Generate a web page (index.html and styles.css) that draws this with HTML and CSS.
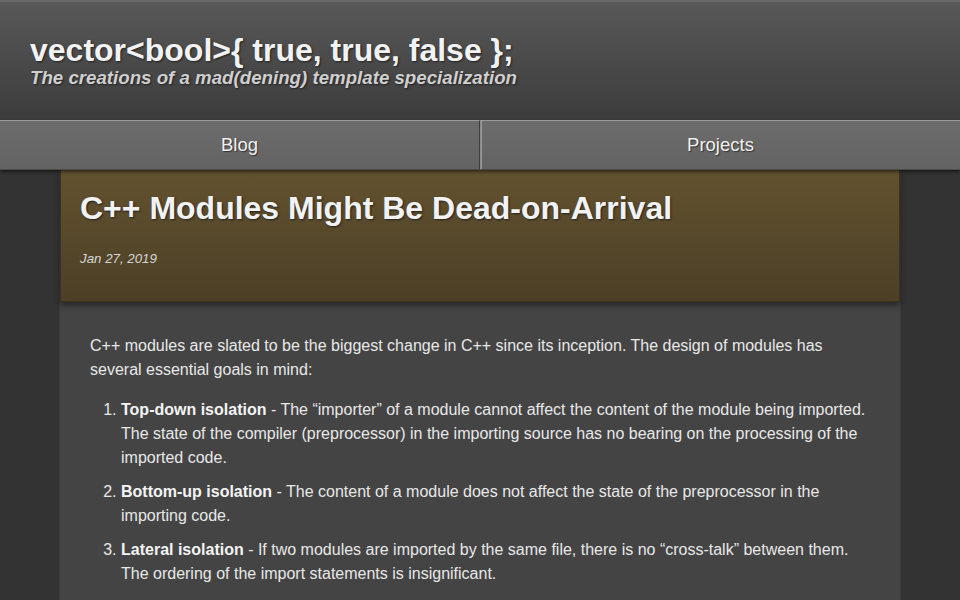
FILE: index.html
```html
<!DOCTYPE html>
<html lang="en">
<head>
<meta charset="utf-8">
<title>C++ Modules Might Be Dead-on-Arrival</title>
<link rel="stylesheet" href="styles.css">
</head>
<body>
<header class="site-header">
  <div class="site-title">vector&lt;bool&gt;{ true, true, false };</div>
  <div class="site-tagline">The creations of a mad(dening) template specialization</div>
</header>
<nav class="site-nav">
  <a class="nav-item" href="#">Blog</a>
  <a class="nav-item" href="#">Projects</a>
</nav>
<main class="page">
  <article class="post">
    <header class="post-header">
      <h1 class="post-title">C++ Modules Might Be Dead-on-Arrival</h1>
      <div class="post-date">Jan 27, 2019</div>
    </header>
    <div class="post-body">
      <p>C++ modules are slated to be the biggest change in C++ since its inception. The design of modules has several essential goals in mind:</p>
      <ol>
        <li><strong>Top-down isolation</strong><span> - The “importer” of a module cannot affect the content of the module being imported. The state of the compiler (preprocessor) in the importing source has no bearing on the processing of the imported code.</span></li>
        <li><strong>Bottom-up isolation</strong><span> - The content of a module does not affect the state of the preprocessor in the importing code.</span></li>
        <li><strong>Lateral isolation</strong><span> - If two modules are imported by the same file, there is no “cross-talk” between them. The ordering of the import statements is insignificant.</span></li>
      </ol>
    </div>
  </article>
</main>
</body>
</html>
```

FILE: styles.css
```css
html, body {
  margin: 0;
  padding: 0;
}

body {
  background: #333333;
  color: #e6e6e6;
  font-family: "Liberation Sans", Arial, sans-serif;
}

/* Site banner */
.site-header {
  height: 120px;
  box-sizing: border-box;
  padding: 31px 30px 0;
  background: linear-gradient(#585858, #3c3c3c);
  border-top: 2px solid #6a6a6a;
}

.site-title {
  font-size: 32px;
  font-weight: bold;
  line-height: 34px;
  color: #f2f2f2;
  text-shadow: 1px 1px 2px #222;
}

.site-tagline {
  font-size: 18.7px;
  font-weight: bold;
  font-style: italic;
  line-height: 22px;
  color: #cfcfcf;
  text-shadow: 1px 1px 2px #222;
}

/* Navigation bar */
.site-nav {
  display: flex;
  height: 50px;
  position: relative;
  z-index: 2;
  box-shadow: 0 2px 3px rgba(0, 0, 0, 0.5);
}

.nav-item {
  flex: 1;
  display: flex;
  align-items: center;
  justify-content: center;
  box-sizing: border-box;
  background: linear-gradient(#6c6c6c, #636363);
  border-top: 1px solid #9a9a9a;
  border-bottom: 1px solid #4a4a4a;
  color: #f0f0f0;
  font-size: 18.5px;
  text-decoration: none;
  text-shadow: 1px 1px 1px #333;
}

.nav-item + .nav-item {
  border-left: 1px solid #8a8a8a;
  box-shadow: inset 1px 0 0 #9a9a9a;
}

.nav-item:first-child {
  border-right: 1px solid #3e3e3e;
}

/* Page column */
.page {
  width: 840px;
  margin: 0 auto;
  min-height: 430px;
  background: #444444;
  box-shadow: -1px 0 0 #3a3a3a, 1px 0 0 #3a3a3a;
}

.post-header {
  box-sizing: border-box;
  height: 132px;
  padding: 19px 19px 0;
  background: linear-gradient(#62522f, #4c3f26);
  border: 1px solid #3b3220;
  border-top: none;
  box-shadow: 0 3px 6px rgba(0, 0, 0, 0.45);
  position: relative;
}

.post-title {
  margin: 0;
  font-size: 32px;
  line-height: 38px;
  font-weight: bold;
  color: #f2f2f2;
  text-shadow: 1px 1px 2px #222;
}

.post-date {
  margin-top: 23px;
  font-size: 13.3px;
  line-height: 18px;
  font-style: italic;
  color: #d6d6d6;
}

.post-body {
  padding: 32px 30px 0;
  font-size: 16px;
  line-height: 24px;
  color: #e8e8e8;
}

.post-body p {
  margin: 0 0 16px;
}

.post-body ol {
  margin: 0;
  padding-left: 31px;
}

.post-body li + li {
  margin-top: 10px;
}

.post-body strong {
  color: #f4f4f4;
}
```
